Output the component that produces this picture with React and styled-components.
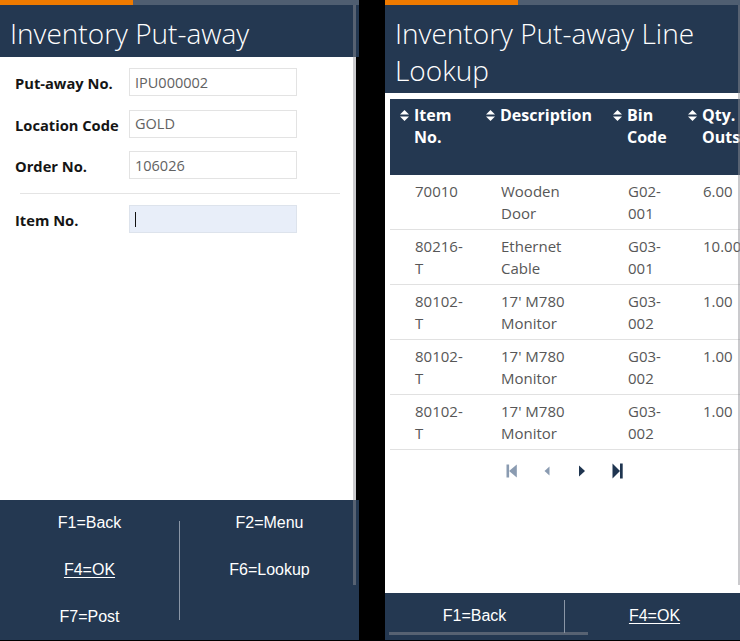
import React from "react";
import styled, { createGlobalStyle } from "styled-components";

const GlobalStyle = createGlobalStyle`
  html, body { margin: 0; padding: 0; background: #000; overflow: hidden; }
  body { font-family: "Open Sans", "DejaVu Sans", sans-serif; }
  * { box-sizing: border-box; }
`;

const NAVY = "#243851";

const Screen = styled.div`
  display: flex;
  gap: 26px;
  width: 740px;
  height: 641px;
  overflow: hidden;
  background: #000;
`;

const Panel = styled.section`
  position: relative;
  flex: 0 0 359px;
  width: 359px;
  height: 640px;
  display: flex;
  flex-direction: column;
  overflow: hidden;
`;

const TopBar = styled.div`
  flex: 0 0 5px;
  display: flex;
  background: #4f5e71;
`;

const TopAccent = styled.div`
  width: 133px;
  background: #ef7a00;
`;

const Header = styled.h1`
  margin: 0;
  padding: 10px 10px ${(p) => p.$bottom || 5}px 10px;
  background: ${NAVY};
  color: #fff;
  font-family: "Open Sans", sans-serif;
  font-weight: 300;
  font-size: 28px;
  line-height: 37px;
`;

const Body = styled.div`
  flex: 1 1 auto;
  margin-right: 3px;
  background: #fff;
  overflow: hidden;
`;

const Form = styled.div`
  display: flex;
  flex-direction: column;
  gap: 13.5px;
  padding: 11px 0 0 15px;
`;

const FieldRow = styled.div`
  display: grid;
  grid-template-columns: 114px 168px;
  align-items: center;
`;

const Label = styled.label`
  font-family: "Open Sans", sans-serif;
  font-weight: 700;
  font-size: 14.7px;
  color: #151515;
  padding-top: 2px;
`;

const Field = styled.div`
  height: 28px;
  display: flex;
  align-items: center;
  padding: 0 5px;
  border: 1px solid ${(p) => (p.$active ? "#dde3ec" : "#e3e3e3")};
  background: ${(p) => (p.$active ? "#e8eef9" : "#fff")};
  font-family: "Open Sans", sans-serif;
  font-size: 14.5px;
  color: #626262;
`;

const Caret = styled.span`
  width: 1px;
  height: 15px;
  background: #111;
`;

const Separator = styled.hr`
  width: 320px;
  margin: 0.5px 0 -2.5px 5px;
  border: 0;
  border-top: 1px solid #e4e4e4;
`;

const Footer = styled.footer`
  flex: 0 0 ${(p) => p.$height}px;
  display: flex;
  background: ${NAVY};
  overflow: hidden;
`;

const KeyColumn = styled.div`
  flex: 1 1 0;
  display: grid;
  grid-auto-rows: 47px;
`;

const KeyDivider = styled.div`
  flex: 0 0 1px;
  align-self: center;
  height: ${(p) => p.$h}px;
  background: #8a96a6;
`;

const Key = styled.div`
  display: flex;
  align-items: center;
  justify-content: center;
  padding-bottom: 1px;
  font-family: "Liberation Sans", Arial, sans-serif;
  font-size: 16px;
  color: #fff;
  text-decoration: ${(p) => (p.$default ? "underline" : "none")};
  text-underline-offset: 2px;
`;

const Thumb = styled.div`
  position: absolute;
  background: rgba(145, 145, 150, 0.48);
  ${(p) =>
    p.$horizontal
      ? `left: 4px; top: 632px; width: 199px; height: 3px;`
      : `right: 3px; top: 5px; width: 3px; height: 580px;`}
`;

const TableWrap = styled.div`
  margin: 6px 0 0 5px;
`;

const Table = styled.table`
  table-layout: fixed;
  width: 420px;
  border-collapse: collapse;
  font-family: "Open Sans", sans-serif;
  font-size: 15px;
  line-height: 22px;
`;

const HeadCell = styled.th`
  height: 76px;
  padding: 5px 2px 0 10px;
  vertical-align: top;
  text-align: left;
  background: ${NAVY};
  color: #fff;
  font-size: 16px;
  font-weight: 700;
  white-space: normal;
`;

const HeadInner = styled.div`
  display: flex;
  gap: 5px;
  align-items: flex-start;
`;

const SortIcon = styled.svg`
  flex: 0 0 9px;
  width: 9px;
  height: 11px;
  margin-top: 6px;
`;

const Row = styled.tr`
  border-bottom: 1px solid #e1e1e1;
`;

const Cell = styled.td`
  height: 54px;
  padding: 5px 10px 5px 25px;
  vertical-align: top;
  color: #575757;
  overflow: visible;
  white-space: normal;
`;

const Pager = styled.div`
  height: 42px;
  display: flex;
  align-items: center;
  justify-content: center;
  gap: 15px;
  padding-left: 3px;
`;

const PagerButton = styled.svg`
  width: 20px;
  height: 18px;
  fill: ${(p) => (p.$disabled ? "#8a9bb1" : "#1f3550")};
`;

const Sort = () => (
  <SortIcon viewBox="0 0 9 11">
    <polygon points="0,4.5 4.5,0 9,4.5" fill="#fff" />
    <polygon points="0,6.5 4.5,11 9,6.5" fill="#fff" />
  </SortIcon>
);

const columns = [
  { label: "Item No.", width: 86 },
  { label: "Description", width: 127 },
  { label: "Bin Code", width: 75 },
  { label: "Qty. Outstanding", width: 132 },
];

const lines = [
  ["70010", "Wooden Door", "G02-001", "6.00"],
  ["80216-T", "Ethernet Cable", "G03-001", "10.00"],
  ["80102-T", "17' M780 Monitor", "G03-002", "1.00"],
  ["80102-T", "17' M780 Monitor", "G03-002", "1.00"],
  ["80102-T", "17' M780 Monitor", "G03-002", "1.00"],
];

export default function App() {
  return (
    <>
      <GlobalStyle />
      <Screen>
        <Panel>
          <TopBar>
            <TopAccent />
          </TopBar>
          <Header>Inventory Put-away</Header>
          <Body>
            <Form>
              <FieldRow>
                <Label>Put-away No.</Label>
                <Field>IPU000002</Field>
              </FieldRow>
              <FieldRow>
                <Label>Location Code</Label>
                <Field>GOLD</Field>
              </FieldRow>
              <FieldRow>
                <Label>Order No.</Label>
                <Field>106026</Field>
              </FieldRow>
              <Separator />
              <FieldRow>
                <Label>Item No.</Label>
                <Field $active>
                  <Caret />
                </Field>
              </FieldRow>
            </Form>
          </Body>
          <Footer $height={140}>
            <KeyColumn>
              <Key>F1=Back</Key>
              <Key $default>F4=OK</Key>
              <Key>F7=Post</Key>
            </KeyColumn>
            <KeyDivider $h={99} />
            <KeyColumn>
              <Key>F2=Menu</Key>
              <Key>F6=Lookup</Key>
            </KeyColumn>
          </Footer>
          <Thumb />
        </Panel>

        <Panel>
          <TopBar>
            <TopAccent />
          </TopBar>
          <Header $bottom={4}>Inventory Put-away Line Lookup</Header>
          <Body>
            <TableWrap>
              <Table>
                <colgroup>
                  {columns.map((c) => (
                    <col key={c.label} style={{ width: c.width }} />
                  ))}
                </colgroup>
                <thead>
                  <tr>
                    {columns.map((c) => (
                      <HeadCell key={c.label}>
                        <HeadInner>
                          <Sort />
                          <span>{c.label}</span>
                        </HeadInner>
                      </HeadCell>
                    ))}
                  </tr>
                </thead>
                <tbody>
                  {lines.map((l, i) => (
                    <Row key={i}>
                      {l.map((v, j) => (
                        <Cell key={j}>{v}</Cell>
                      ))}
                    </Row>
                  ))}
                </tbody>
              </Table>
            </TableWrap>
            <Pager>
              <PagerButton $disabled viewBox="0 0 20 18">
                <rect x="4.5" y="2.5" width="2.6" height="13" />
                <polygon points="7.1,9 14.8,2.5 14.8,15.5" />
              </PagerButton>
              <PagerButton $disabled viewBox="0 0 20 18">
                <polygon points="7.5,9 12.5,4.5 12.5,13.5" />
              </PagerButton>
              <PagerButton viewBox="0 0 20 18">
                <polygon points="13,9 7,3.5 7,14.5" />
              </PagerButton>
              <PagerButton viewBox="0 0 20 18">
                <polygon points="13,9 5.5,1.5 5.5,16.5" />
                <rect x="13" y="1.5" width="2.7" height="15" />
              </PagerButton>
            </Pager>
          </Body>
          <Footer $height={47}>
            <KeyColumn>
              <Key>F1=Back</Key>
            </KeyColumn>
            <KeyDivider $h={33} />
            <KeyColumn>
              <Key $default>F4=OK</Key>
            </KeyColumn>
          </Footer>
          <Thumb />
          <Thumb $horizontal />
        </Panel>
      </Screen>
    </>
  );
}
